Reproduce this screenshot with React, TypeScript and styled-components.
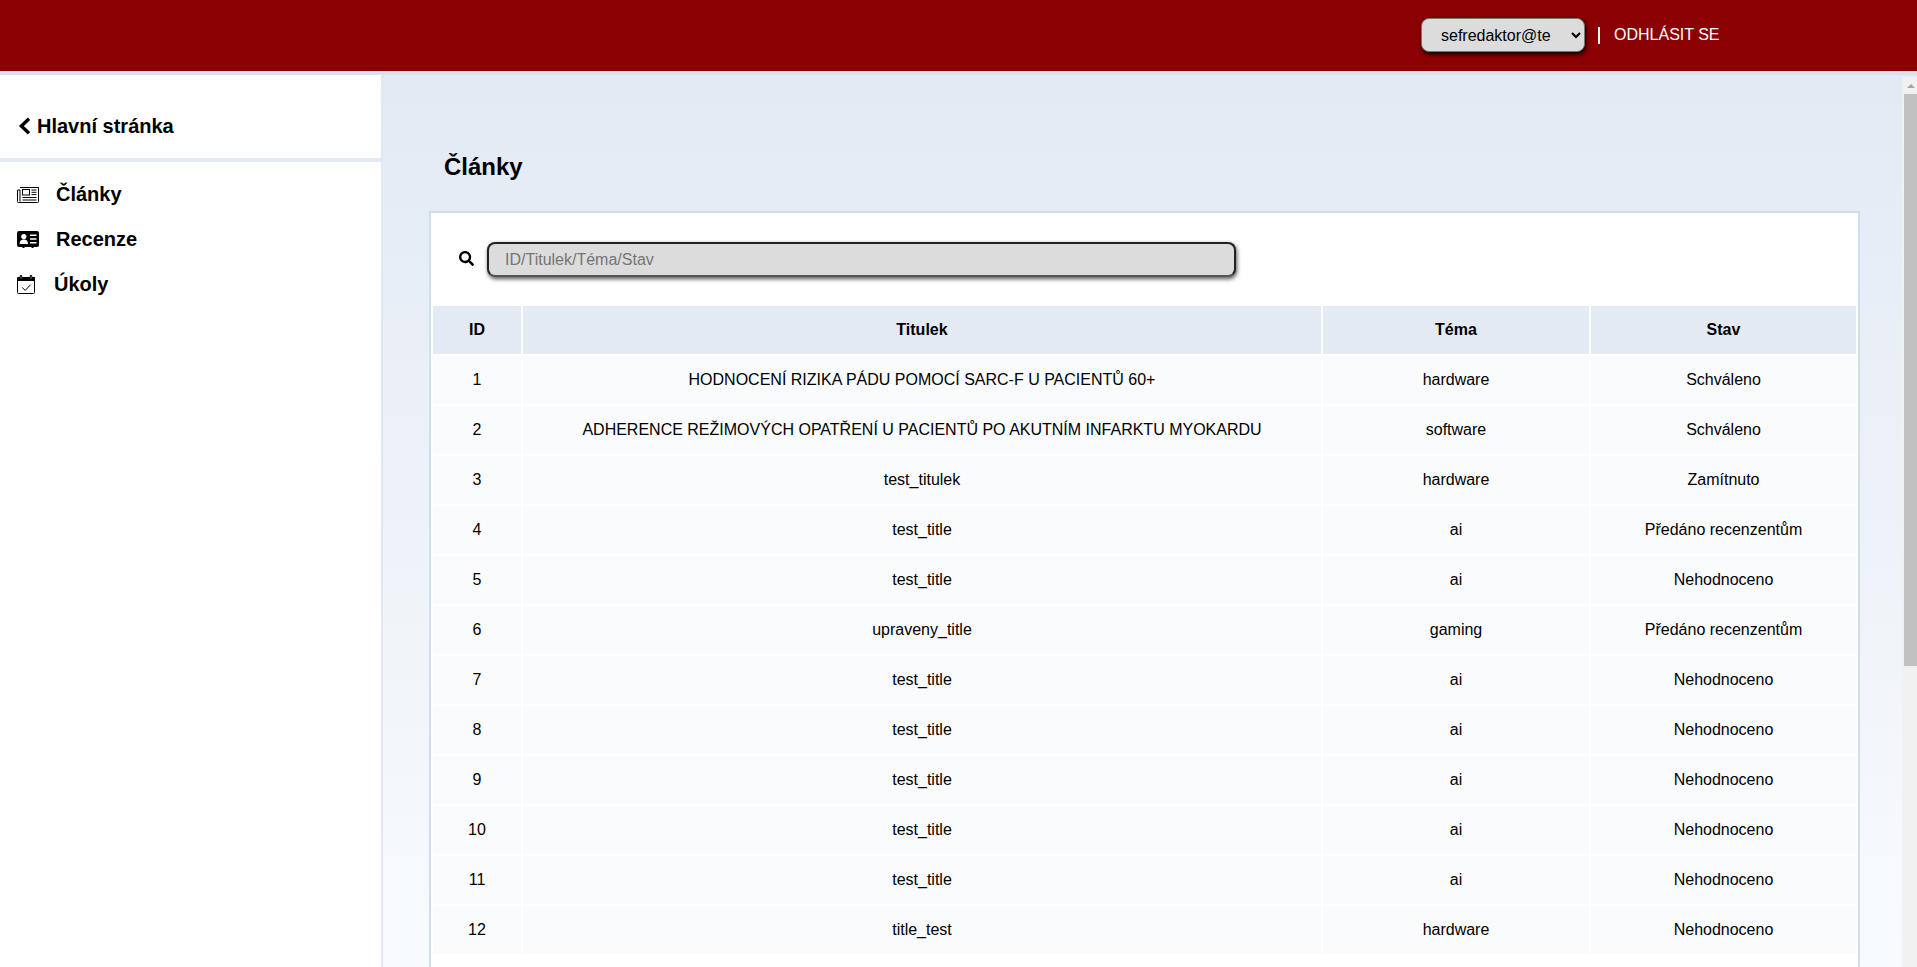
import styled, { createGlobalStyle } from "styled-components";
import { FaSearch } from "react-icons/fa";

const GlobalStyle = createGlobalStyle`
  html, body {
    margin: 0;
    padding: 0;
    height: 100%;
    overflow: hidden;
  }
  body {
    font-family: "Liberation Sans", Arial, sans-serif;
    color: #000;
    background: #e3eaf4;
  }
`;

const Page = styled.div`
  display: flex;
  flex-direction: column;
  height: 967px;
`;

const Header = styled.header`
  flex: none;
  height: 71px;
  background: #8b0000;
  border-bottom: 4px solid #d6e2f0;
  display: flex;
  align-items: center;
  padding-left: 1421px;
  gap: 13px;
`;

const UserSelect = styled.select`
  width: 164px;
  height: 34px;
  margin-top: -1px;
  padding-left: 15px;
  font-family: inherit;
  font-size: 16px;
  color: #000;
  background: #dcdcdc;
  border: 1px solid #777;
  border-radius: 8px;
  box-shadow: 1px 2px 4px #000;
`;

const HeaderDivider = styled.span`
  width: 2px;
  height: 17px;
  background: #fff;
`;

const LogoutLink = styled.a`
  margin-top: -1px;
  margin-left: 1px;
  font-size: 16px;
  color: #fff;
  text-decoration: none;
`;

const Body = styled.div`
  flex: 1;
  min-height: 0;
  display: flex;
`;

const Sidebar = styled.aside`
  flex: none;
  width: 381px;
  border-right: 2px solid #dfe8f3;
  background: #fff;
`;

const BackRow = styled.div`
  box-sizing: border-box;
  height: 87px;
  padding: 19px 0 0 18px;
  display: flex;
  align-items: center;
  gap: 6px;
  font-size: 20px;
  font-weight: 700;
  border-bottom: 4px solid #e3eaf4;
  svg {
    flex: none;
  }
`;

const NavList = styled.nav`
  display: flex;
  flex-direction: column;
  padding: 10px 0 0 17px;
`;

const NavItem = styled.a<{ $gap: number }>`
  height: 45px;
  display: flex;
  align-items: center;
  gap: ${(props) => props.$gap}px;
  font-size: 20px;
  font-weight: 700;
  color: #000;
  svg {
    flex: none;
  }
`;

const Main = styled.main`
  position: relative;
  flex: 1;
  min-width: 0;
  overflow: hidden;
  padding: 78px 57px 0 46px;
  background: linear-gradient(180deg, #e3eaf4 0%, #f8fbfe 100%);
`;

// нарисованная полоса прокрутки
const ScrollTrack = styled.div`
  position: absolute;
  top: 2px;
  right: 0;
  bottom: 0;
  width: 15px;
  background: #f1f1f1;
  display: flex;
  flex-direction: column;
`;

const ScrollArrow = styled.div`
  flex: none;
  height: 17px;
  display: flex;
  justify-content: center;
  padding-left: 2px;
  box-sizing: border-box;
  &::after {
    content: "";
    margin-top: 7px;
    width: 0;
    height: 0;
    border-left: 4px solid transparent;
    border-right: 4px solid transparent;
    border-bottom: 4px solid #a3a3a3;
  }
`;

const ScrollThumb = styled.div`
  flex: none;
  height: 572px;
  margin-left: 2px;
  background: #c1c1c1;
`;

const PageTitle = styled.h1`
  margin: 0 0 30px 15px;
  font-size: 24px;
  line-height: 28px;
  font-weight: 700;
`;

const Card = styled.section`
  min-height: 1100px;
  background: #fff;
  border: 2px solid #cfdeed;
`;

const SearchRow = styled.div`
  height: 91px;
  display: flex;
  align-items: center;
  padding: 0 0 0 28px;
  gap: 13px;
  svg {
    font-size: 15px;
    flex: none;
  }
`;

const SearchInput = styled.input`
  width: 749px;
  height: 35px;
  margin-top: 2px;
  box-sizing: border-box;
  padding: 0 16px;
  font-family: inherit;
  font-size: 16px;
  background: #dcdcdc;
  border: 2px solid #222;
  border-bottom-color: #555;
  border-radius: 8px;
  box-shadow: 1px 2px 4px #555;
  outline: none;
  &::placeholder {
    color: #757575;
  }
`;

const Table = styled.table`
  width: 1427px;
  table-layout: fixed;
  border-collapse: separate;
  border-spacing: 2px;
  font-size: 16px;
`;

const HeadCell = styled.th`
  height: 48px;
  padding: 0;
  background: #e3eaf4;
  font-weight: 700;
  text-align: center;
`;

const Cell = styled.td`
  height: 48px;
  padding: 0;
  background: #f9fbfd;
  text-align: center;
`;

const BackIcon = () => (
  <svg width="13" height="18" viewBox="0 0 13 18" fill="none" stroke="#000">
    <path strokeWidth="3.4" d="M11 1.8L3.4 9l7.6 7.2" />
  </svg>
);

const NewspaperIcon = () => (
  <svg width="22" height="16" viewBox="0 0 22 16" fill="none" stroke="#000">
    <path d="M3 .5h18.5v14a1 1 0 0 1-1 1H1.5a1 1 0 0 1-1-1V3H3v11.5" />
    <rect x="5.5" y="2.5" width="7" height="5.5" />
    <path d="M14.5 3h5M14.5 5.3h5M14.5 7.6h5M5.5 10.5h14M5.5 13h14" />
  </svg>
);

const IdCardIcon = () => (
  <svg width="22" height="17" viewBox="0 0 22 17">
    <path
      fill="#000"
      d="M2 0h18a2 2 0 0 1 2 2v12a2 2 0 0 1-2 2h-3.5v1h-2v-1h-7v1h-2v-1H2a2 2 0 0 1-2-2V2a2 2 0 0 1 2-2z"
    />
    <circle cx="6.8" cy="5.6" r="2.6" fill="#fff" />
    <path fill="#fff" d="M2.6 13c0-3 1.6-4.4 4.2-4.4S11 10 11 13z" />
    <path fill="#fff" d="M13 3.5h6.5v1.6H13zM13 7.2h6.5v1.6H13zM13 10.9h6.5v1.6H13z" />
  </svg>
);

const CalendarIcon = () => (
  <svg width="18" height="19" viewBox="0 0 18 19" fill="none" stroke="#000">
    <path fill="#000" stroke="none" d="M1 2h17v4H0V3a1 1 0 0 1 1-1z" />
    <path d="M.5 5v12.5a1 1 0 0 0 1 1h15a1 1 0 0 0 1-1V5" />
    <path stroke="#000" strokeWidth="2.6" strokeLinecap="round" d="M4 1.3v2.4M14 1.3v2.4" />
    <path stroke="#fff" d="M4 1.3v2.4M14 1.3v2.4" opacity="0.55" />
    <path d="M5.2 12.4l3 3 5.3-5.6" />
  </svg>
);

const articles = [
  ["1", "HODNOCENÍ RIZIKA PÁDU POMOCÍ SARC-F U PACIENTŮ 60+", "hardware", "Schváleno"],
  ["2", "ADHERENCE REŽIMOVÝCH OPATŘENÍ U PACIENTŮ PO AKUTNÍM INFARKTU MYOKARDU", "software", "Schváleno"],
  ["3", "test_titulek", "hardware", "Zamítnuto"],
  ["4", "test_title", "ai", "Předáno recenzentům"],
  ["5", "test_title", "ai", "Nehodnoceno"],
  ["6", "upraveny_title", "gaming", "Předáno recenzentům"],
  ["7", "test_title", "ai", "Nehodnoceno"],
  ["8", "test_title", "ai", "Nehodnoceno"],
  ["9", "test_title", "ai", "Nehodnoceno"],
  ["10", "test_title", "ai", "Nehodnoceno"],
  ["11", "test_title", "ai", "Nehodnoceno"],
  ["12", "title_test", "hardware", "Nehodnoceno"],
];

const columns = [88, 798, 266, 265];

export default function App() {
  return (
    <Page>
      <GlobalStyle />
      <Header>
        <UserSelect defaultValue="sefredaktor@te">
          <option>sefredaktor@te</option>
        </UserSelect>
        <HeaderDivider />
        <LogoutLink>ODHLÁSIT SE</LogoutLink>
      </Header>
      <Body>
        <Sidebar>
          <BackRow>
            <BackIcon />
            Hlavní stránka
          </BackRow>
          <NavList>
            <NavItem $gap={17}>
              <NewspaperIcon />
              Články
            </NavItem>
            <NavItem $gap={17}>
              <IdCardIcon />
              Recenze
            </NavItem>
            <NavItem $gap={19}>
              <CalendarIcon />
              Úkoly
            </NavItem>
          </NavList>
        </Sidebar>
        <Main>
          <PageTitle>Články</PageTitle>
          <Card>
            <SearchRow>
              <FaSearch />
              <SearchInput placeholder="ID/Titulek/Téma/Stav" />
            </SearchRow>
            <Table>
              <colgroup>
                {columns.map((width, i) => (
                  <col key={i} style={{ width }} />
                ))}
              </colgroup>
              <thead>
                <tr>
                  <HeadCell>ID</HeadCell>
                  <HeadCell>Titulek</HeadCell>
                  <HeadCell>Téma</HeadCell>
                  <HeadCell>Stav</HeadCell>
                </tr>
              </thead>
              <tbody>
                {articles.map((row) => (
                  <tr key={row[0]}>
                    {row.map((value, i) => (
                      <Cell key={i}>{value}</Cell>
                    ))}
                  </tr>
                ))}
              </tbody>
            </Table>
          </Card>
          <ScrollTrack>
            <ScrollArrow />
            <ScrollThumb />
          </ScrollTrack>
        </Main>
      </Body>
    </Page>
  );
}
